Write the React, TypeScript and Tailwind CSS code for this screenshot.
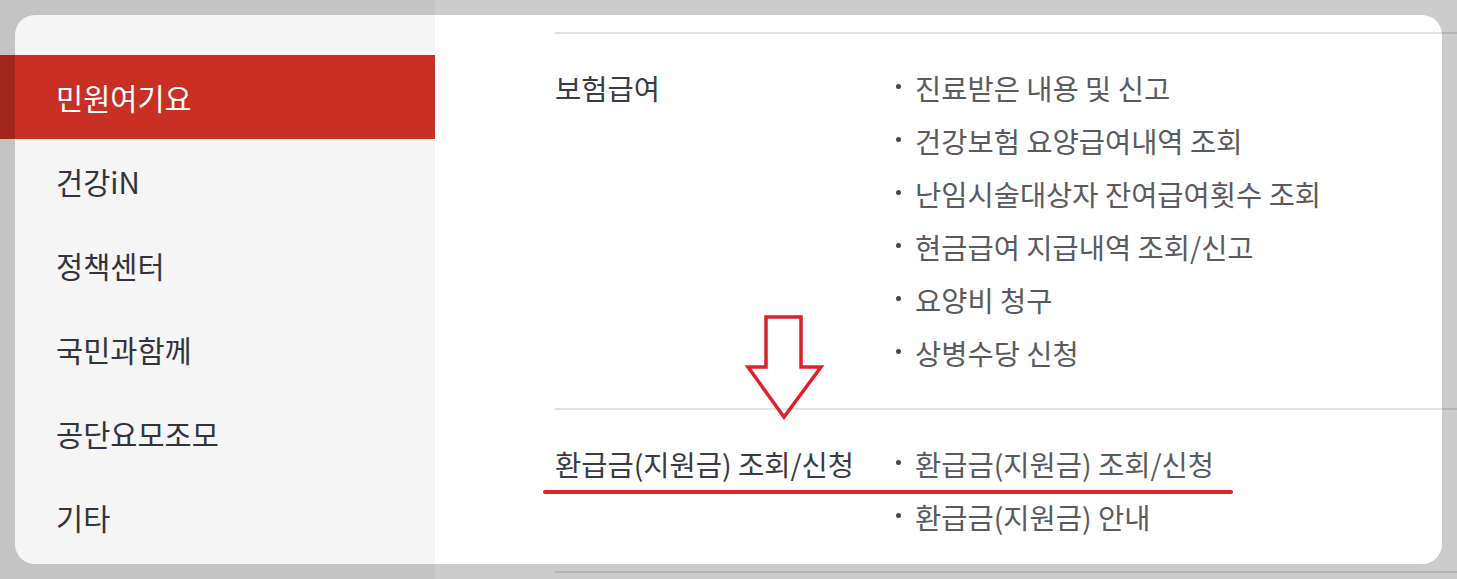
import React from "react";

const font = { fontFamily: '"Noto Sans CJK KR", "Noto Sans", sans-serif' };

const sideItems = ["민원여기요", "건강iN", "정책센터", "국민과함께", "공단요모조모", "기타"];

const sections = [
  {
    title: "보험급여",
    items: [
      "진료받은 내용 및 신고",
      "건강보험 요양급여내역 조회",
      "난임시술대상자 잔여급여횟수 조회",
      "현금급여 지급내역 조회/신고",
      "요양비 청구",
      "상병수당 신청",
    ],
  },
  {
    title: "환급금(지원금) 조회/신청",
    items: ["환급금(지원금) 조회/신청", "환급금(지원금) 안내"],
  },
];

export default function App() {
  return (
    <div className="relative w-[1457px] h-[579px] overflow-hidden flex bg-white" style={font}>
      <aside className="w-[435px] shrink-0 bg-[#f5f5f5] pt-[55px]">
        {sideItems.map((s, i) => (
          <div
            key={s}
            className={
              i === 0
                ? "h-[84px] flex items-center pl-[56px] bg-[#c93023] text-white text-[29.5px]"
                : "h-[84px] flex items-center pl-[56px] text-[#33333b] text-[29.5px]"
            }
          >
            {s}
          </div>
        ))}
      </aside>
      <main className="flex-1 pl-[120px] pt-[32px]">
        {sections.map((sec, si) => (
          <section
            key={sec.title}
            className={
              si === 0
                ? "border-t-2 border-[#e2e2e2] pt-[28px] pb-[28px] flex"
                : "border-t-2 border-b-2 border-[#e2e2e2] pt-[28px] pb-[27px] flex"
            }
          >
            <div className="w-[338px] shrink-0 h-[53px] flex items-center text-[28.5px] text-[#3a3a45]">
              {sec.title}
            </div>
            <ul className="flex flex-col">
              {sec.items.map((it) => (
                <li key={it} className="h-[53px] flex items-center text-[28.5px] text-[#5a5a5e]">
                  <span className="w-[5px] h-[5px] rounded-full bg-[#45454d] ml-[3px] mr-[14px] -mt-[4px]" />
                  {it}
                </li>
              ))}
            </ul>
          </section>
        ))}
      </main>

      {/* dimmed frame */}
      <div className="absolute left-[15px] top-[15px] w-[1427px] h-[549px] rounded-[20px] shadow-[0_0_0_2000px_rgba(0,0,0,0.2)] pointer-events-none" />

      {/* annotation: arrow */}
      <svg className="absolute left-[740px] top-[310px]" width="90" height="115" viewBox="0 0 90 115">
        <polygon
          points="26,7 61,7 61,57 81,57 44,107 8,57 26,57"
          fill="none"
          stroke="#e0212b"
          strokeWidth="3.5"
          strokeLinejoin="miter"
        />
      </svg>

      {/* annotation: underline */}
      <div className="absolute left-[543px] top-[490px] w-[690px] h-[4px] rounded-full bg-[#e0212b]" />
    </div>
  );
}
